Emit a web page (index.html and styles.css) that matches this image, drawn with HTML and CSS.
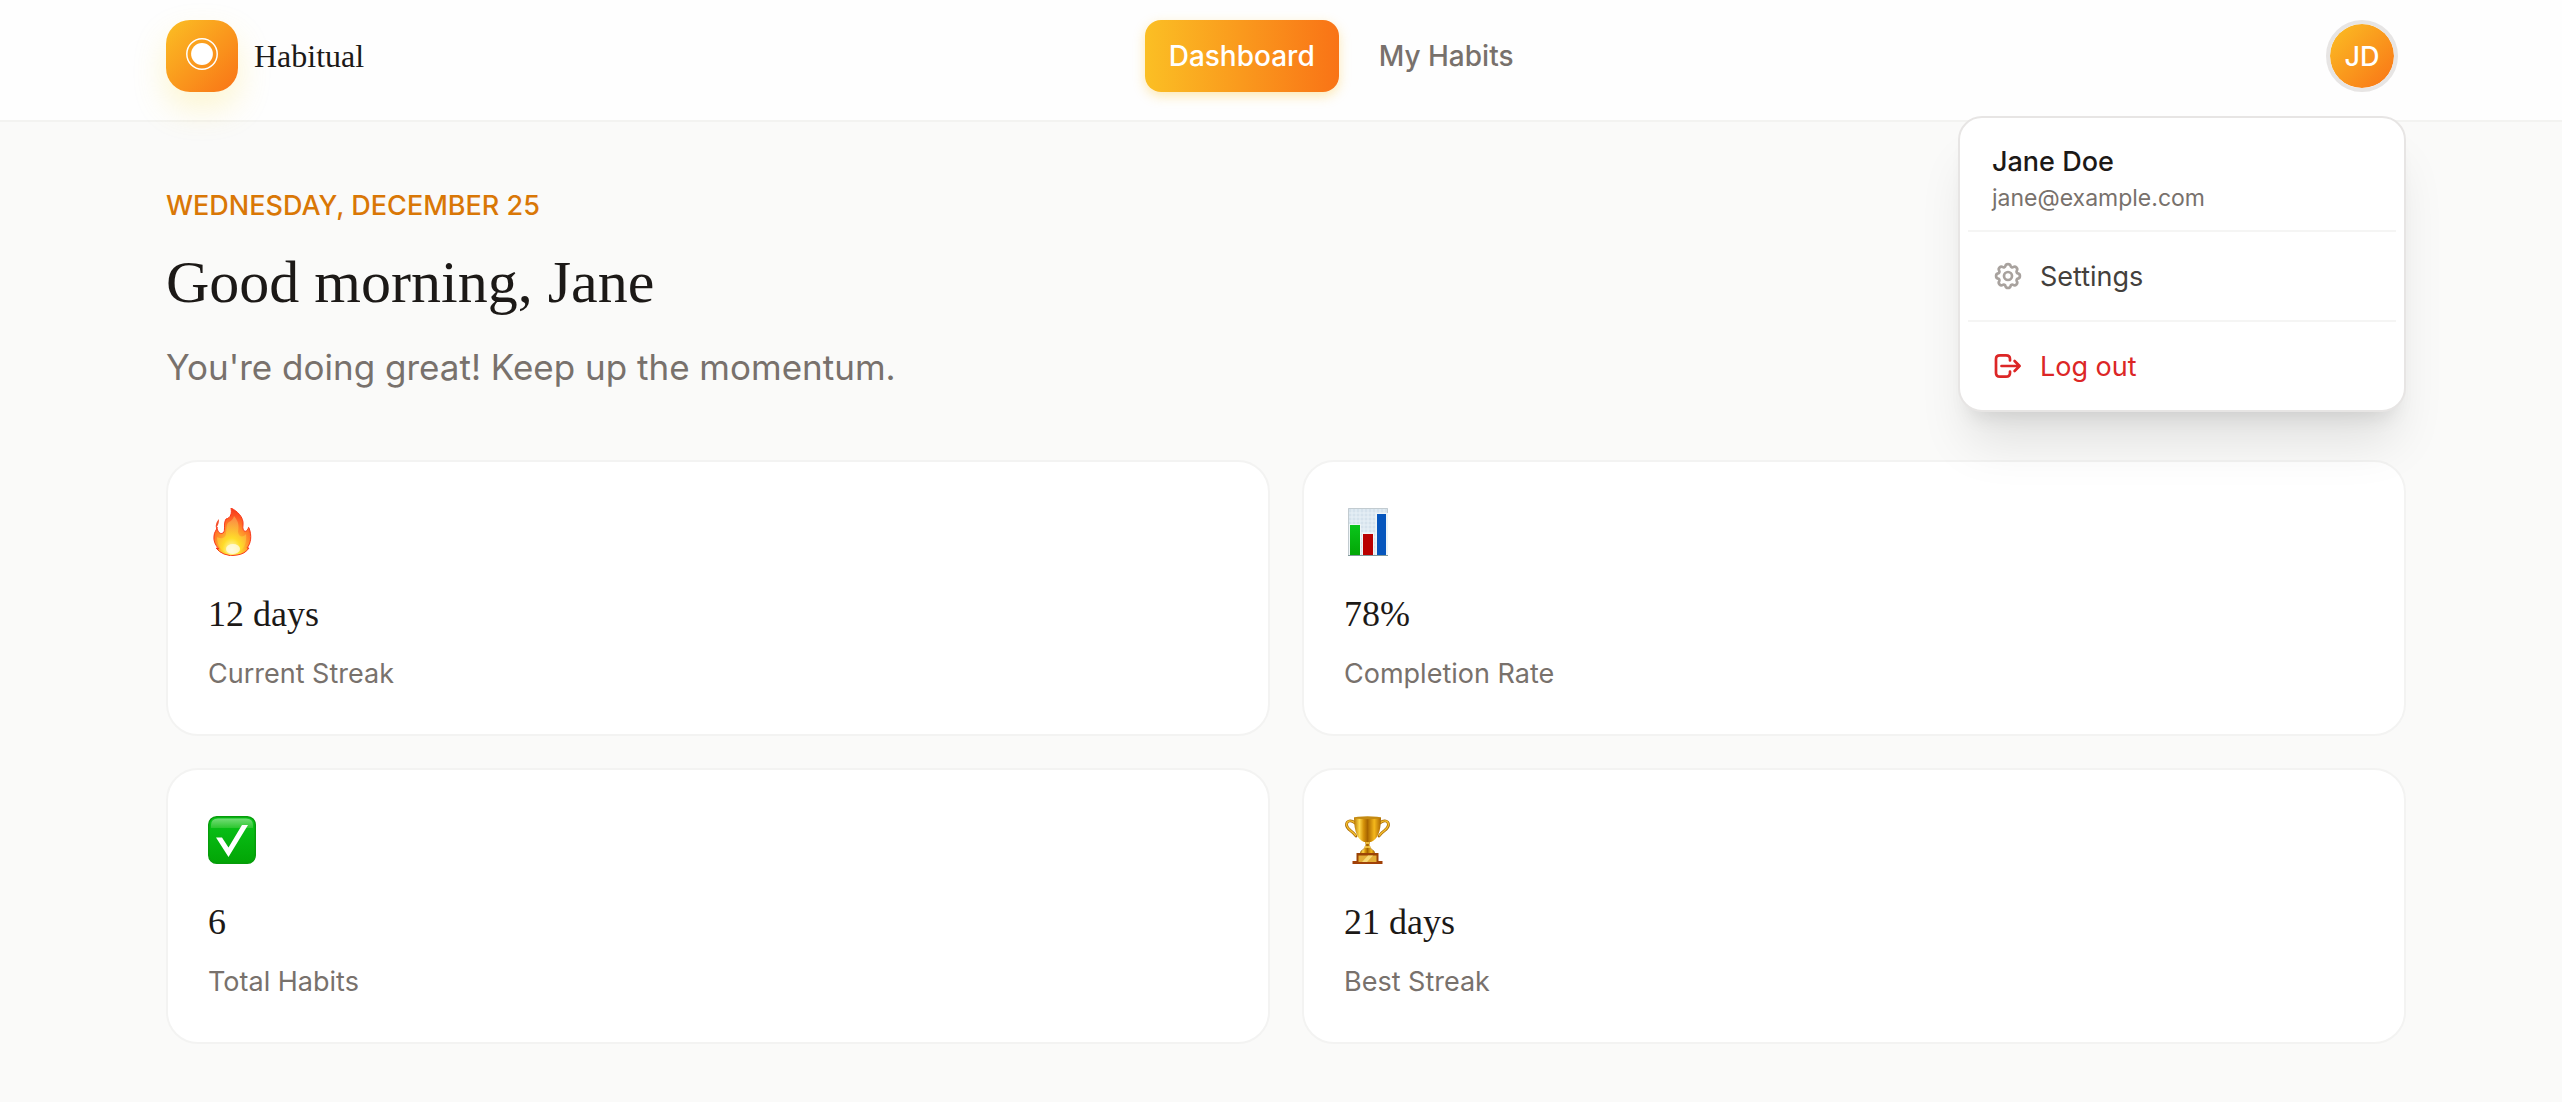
FILE: index.html
```
<!DOCTYPE html>
<html lang="en">
<head>
    <meta charset="UTF-8">
    <meta name="viewport" content="width=device-width, initial-scale=1.0">
    <title>Habitual - Dashboard</title>
    <link rel="stylesheet" href="styles.css">
</head>
<body>
    <header class="header">
        <a class="brand" href="#">
            <span class="brand-mark">
                <svg width="72" height="72" viewBox="0 0 72 72" aria-hidden="true">
                    <circle cx="36" cy="34" r="15.2" fill="none" stroke="#fff" stroke-width="1.5"/>
                    <circle cx="36" cy="34" r="10.9" fill="#fff"/>
                </svg>
            </span>
            <span class="brand-name">Habitual</span>
        </a>

        <nav class="nav">
            <a class="nav-link active" href="#">Dashboard</a>
            <a class="nav-link" href="#">My Habits</a>
        </nav>

        <div class="user">
            <button class="avatar" type="button" aria-haspopup="true" aria-expanded="true">JD</button>

            <div class="menu">
                <div class="menu-user">
                    <div class="menu-name">Jane Doe</div>
                    <div class="menu-email">jane@example.com</div>
                </div>
                <a class="menu-item" href="#">
                    <svg class="menu-icon" viewBox="0 0 32 32" aria-hidden="true">
                        <path d="M13.4 6.1C13.9 3.400 18.1 3.400 18.6 6.1C18.8 7.2 20.2 7.8 21.2 7.2C23.500 5.700 26.300 8.500 24.8 10.8C24.2 11.8 24.8 13.2 25.9 13.4C28.600 13.9 28.600 18.1 25.9 18.6C24.8 18.8 24.2 20.2 24.8 21.2C26.300 23.500 23.500 26.300 21.2 24.8C20.2 24.2 18.8 24.8 18.6 25.9C18.1 28.600 13.9 28.600 13.4 25.9C13.2 24.8 11.8 24.2 10.8 24.8C8.500 26.300 5.700 23.500 7.2 21.2C7.8 20.2 7.2 18.8 6.1 18.6C3.400 18.1 3.400 13.9 6.1 13.4C7.2 13.2 7.8 11.8 7.2 10.8C5.700 8.500 8.500 5.700 10.8 7.2C11.8 7.8 13.2 7.2 13.4 6.1Z"/>
                        <circle cx="16" cy="16" r="4"/>
                    </svg>
                    Settings
                </a>
                <hr class="menu-line">
                <button class="menu-item logout" type="button">
                    <svg class="menu-icon" viewBox="0 0 32 32" aria-hidden="true">
                        <path d="M18 10.5V9Q18 5.300 14 5.300H8Q4 5.300 4 9V23Q4 26.700 8 26.700H14Q18 26.700 18 23V21.5"/>
                        <path d="M9.5 16H27.600M22.600 11L27.600 16L22.600 21"/>
                    </svg>
                    Log out
                </button>
            </div>
        </div>
    </header>

    <main class="main">
        <section class="hero">
            <p class="date">Wednesday, December 25</p>
            <h1 class="greeting">Good morning, Jane</h1>
            <p class="subtitle">You're doing great! Keep up the momentum.</p>
        </section>

        <section class="stats">
            <!-- current streak -->
            <div class="card">
                <svg class="card-icon" viewBox="0 0 48 48" aria-hidden="true">
                    <defs>
                        <radialGradient id="fire" cx=".5" cy=".88" r=".85">
                            <stop offset="0" stop-color="#fff6b0"/>
                            <stop offset=".22" stop-color="#ffe02e"/>
                            <stop offset=".48" stop-color="#ff9d2c"/>
                            <stop offset=".8" stop-color="#ff5a24"/>
                            <stop offset="1" stop-color="#f5391c"/>
                        </radialGradient>
                        <radialGradient id="fireCore" cx=".5" cy=".9" r=".8">
                            <stop offset="0" stop-color="#fffbe0"/>
                            <stop offset=".4" stop-color="#ffdf28"/>
                            <stop offset="1" stop-color="#fa9a48"/>
                        </radialGradient>
                    </defs>
                    <path d="M11 11Q7 15 8 20Q11 17 11 11Z" fill="#f4502c"/>
                    <path d="M23 0C29 3 36 9 35 17C34 22 37 26 40 21C40.500 20 40.300 18.500 41 20C44 28 43 35 39 40L41 40Q37 46 29 47Q23 49 16 46Q11 44 8 40L11 41Q5 35 6 28C6 24 9 22 9 19C9 23 12 27 15 25C18 23 15 16 18 11C23 10 24 5 23 0Z" fill="url(#fire)" stroke="#f9391b" stroke-width="1"/>
                    <path d="M26 8C31 14 31 18 30 24C31 30 36 29 38 26C39 35 36 44 25 46C14 46 9 38 9 29C12 31 18 31 18 25C19 20 18 16 21 14Q25 12 26 8Z" fill="url(#fireCore)" opacity=".85"/>
                    <ellipse cx="25" cy="41" rx="7" ry="5" fill="#fffbe4" opacity=".8"/>
                </svg>
                <div class="card-value">12 days</div>
                <div class="card-label">Current Streak</div>
            </div>

            <!-- completion rate -->
            <div class="card">
                <svg class="card-icon" viewBox="0 0 48 48" aria-hidden="true">
                    <defs>
                        <linearGradient id="green" x2="0" y2="1">
                            <stop offset="0" stop-color="#0ac51b"/>
                            <stop offset="1" stop-color="#02a505"/>
                        </linearGradient>
                    </defs>
                    <rect x="4" width="40" height="48" fill="#d5e2ec"/>
                    <path d="M8 1V48M12 1V48M16 1V48M20 1V48M24 1V48M28 1V48M32 1V48M36 1V48M40 1V48M4 5H44M4 9H44M4 13H44M4 17H44M4 21H44M4 25H44M4 29H44M4 33H44M4 37H44M4 41H44M4 45H44" stroke="#e8f1f7" stroke-width="1"/>
                    <path d="M4.500 48V.5H43.500V48" fill="none" stroke="#c2cbd0"/>
                    <path d="M5 16H17V48H5ZM18 24.500H30V48H18ZM31.500 5H44V48H31.500Z" fill="#eff5f7"/>
                    <rect x="6" y="17" width="10" height="31" fill="url(#green)"/>
                    <rect x="19" y="26" width="10" height="22" fill="#b90000"/>
                    <rect x="33" y="6" width="9" height="42" fill="#0656bd"/>
                    <path d="M4 47.500H44" stroke="#82999c"/>
                </svg>
                <div class="card-value">78%</div>
                <div class="card-label">Completion Rate</div>
            </div>

            <!-- total habits -->
            <div class="card">
                <svg class="card-icon" viewBox="0 0 48 48" aria-hidden="true">
                    <defs>
                        <linearGradient id="shine" x2="0" y2="1">
                            <stop offset="0" stop-color="#8ee28d"/>
                            <stop offset="1" stop-color="#35c936"/>
                        </linearGradient>
                    </defs>
                    <rect x=".7" y=".7" width="46.600" height="46.600" rx="8" fill="url(#green)" stroke="#079c0b" stroke-width="1.400"/>
                    <path d="M3 12V9Q3 2.500 10 2.500H38Q45 2.500 45 9V12Z" fill="url(#shine)" opacity=".8"/>
                    <path d="M8 21.500H14L20.500 31.500L34 9H40L20.500 41Z" fill="#fff"/>
                </svg>
                <div class="card-value">6</div>
                <div class="card-label">Total Habits</div>
            </div>

            <!-- best streak -->
            <div class="card">
                <svg class="card-icon" viewBox="0 0 48 48" aria-hidden="true">
                    <defs>
                        <linearGradient id="gold">
                            <stop offset="0" stop-color="#b67600"/>
                            <stop offset=".2" stop-color="#ffd84a"/>
                            <stop offset=".36" stop-color="#d49108"/>
                            <stop offset=".5" stop-color="#a86500"/>
                            <stop offset=".75" stop-color="#f5b81b"/>
                            <stop offset="1" stop-color="#aa6600"/>
                        </linearGradient>
                    </defs>
                    <path d="M11 7C7 3.500 2.500 4.500 2.500 9C3 14 8 14 12 20M36 7C40 3.500 44.500 4.500 44.500 9C44 14 39 14 35 20" fill="none" stroke="#a76600" stroke-width="2.800" stroke-linecap="round"/>
                    <path d="M11 7C7 3.500 2.500 4.500 2.500 9C3 14 8 14 12 20M36 7C40 3.500 44.500 4.500 44.500 9C44 14 39 14 35 20" fill="none" stroke="#f2bd2e" stroke-width="1.400"/>
                    <path d="M21 24H26L25 29Q26 33 30 35L31 38H16L17 35Q21 33 22 29Z" fill="url(#gold)" stroke="#9b6000" stroke-width=".6"/>
                    <path d="M10 1.500H37Q37 22 27 26H20Q10 22 10 1.500Z" fill="url(#gold)"/>
                    <ellipse cx="23.500" cy="1.700" rx="13.500" ry="1.500" fill="#c48a12"/>
                    <path d="M21.500 27H25.500M20.500 31H26.500" stroke="#ffd650" stroke-width="1.500"/>
                    <path d="M12.500 37H34.500V45H12.500Z" fill="#9b4305"/>
                    <path d="M8.500 45H38.500V48H8.500Z" fill="#a14108"/>
                    <path d="M14.500 39.500H32.500V46H14.500Z" fill="#e3ae37"/>
                    <path d="M18 46L24 39.500H29L23 46Z" fill="#f7d875"/>
                </svg>
                <div class="card-value">21 days</div>
                <div class="card-label">Best Streak</div>
            </div>
        </section>
    </main>
</body>
</html>
```
FILE: styles.css
```
:root {
    --page-bg: #fafaf9;
    --text-dark: #1c1917;
    --text-muted: #78716c;
    --border: #e7e5e4;
    --border-light: #f3f3f2;
    --amber: #fbbf24;
    --orange: #f97316;
}

* {
    box-sizing: border-box;
}

body {
    font-family: Inter, 'Liberation Sans', sans-serif;
    font-size: 28px;
    background: var(--page-bg);
    color: var(--text-dark);
    margin: 0;
    min-height: 100vh;
}

a {
    color: inherit;
    text-decoration: none;
}

p,
h1 {
    margin: 0;
}

/* header */
.header {
    display: flex;
    justify-content: space-between;
    align-items: center;
    padding: 20px 156px 28px 166px;
    background: #fefefe;
    border-bottom: 2px solid #f3f3f1;
}

.brand {
    display: flex;
    align-items: center;
    gap: 16px;
}

.brand-mark {
    display: flex;
    border-radius: 24px;
    background: linear-gradient(135deg, var(--amber), var(--orange));
    box-shadow: 0 16px 32px rgba(253, 224, 71, 0.25);
}

.brand-name {
    font-family: 'Liberation Serif', serif;
    font-size: 32px;
}

.nav {
    display: flex;
    gap: 16px;
}

.nav-link {
    padding: 0 24px;
    border-radius: 16px;
    font-size: 28px;
    font-weight: 500;
    line-height: 72px;
    color: var(--text-muted);
}

.nav-link.active {
    color: #fff;
    background: linear-gradient(90deg, var(--amber), var(--orange));
    box-shadow: 0 4px 12px rgba(251, 191, 36, 0.35);
}

.user {
    position: relative;
    padding: 0 8px;
}

.avatar {
    display: block;
    width: 72px;
    height: 72px;
    padding: 0;
    border: 4px solid var(--border);
    border-radius: 50%;
    background: linear-gradient(135deg, var(--amber), var(--orange)) padding-box;
    color: #fff;
    font-family: inherit;
    font-size: 27px;
    font-weight: 500;
    cursor: pointer;
}

/* dropdown */
.menu {
    position: absolute;
    top: calc(100% + 24px);
    right: 0;
    z-index: 10;
    width: 448px;
    padding: 8px;
    border: 2px solid var(--border);
    border-radius: 24px;
    background: #fff;
    box-shadow: 0 40px 50px -10px rgba(0, 0, 0, 0.1), 0 16px 20px -12px rgba(0, 0, 0, 0.1);
}

.menu-user {
    padding: 16px 24px;
    border-bottom: 2px solid #f5f5f4;
}

.menu-name {
    font-size: 27px;
    font-weight: 500;
    line-height: 40px;
}

.menu-email {
    font-size: 23px;
    line-height: 32px;
    color: var(--text-muted);
}

.menu-item {
    display: flex;
    align-items: center;
    gap: 16px;
    width: 100%;
    height: 72px;
    margin: 8px 0;
    padding: 0 24px;
    border: none;
    background: none;
    color: #44403c;
    font-family: inherit;
    font-size: 27px;
    cursor: pointer;
}

.menu-item.logout {
    margin-bottom: 0;
    color: #dc2626;
}

.menu-icon {
    width: 32px;
    height: 32px;
    fill: none;
    stroke: #a8a29e;
    stroke-width: 2.7;
    stroke-linecap: round;
    stroke-linejoin: round;
}

.logout .menu-icon {
    stroke: #dc2626;
}

.menu-line {
    height: 2px;
    margin: 0;
    border: none;
    background: #f5f5f4;
}

/* content */
.main {
    padding: 64px 156px 56px 166px;
}

.hero {
    margin-bottom: 66px;
}

.date {
    font-size: 27px;
    font-weight: 500;
    line-height: 40px;
    text-transform: uppercase;
    color: #d97706;
}

.greeting {
    margin: 14px 0 16px;
    font-family: 'Liberation Serif', serif;
    font-size: 60px;
    font-weight: 400;
    line-height: 84px;
}

.subtitle {
    font-size: 35px;
    line-height: 54px;
    color: var(--text-muted);
}

.stats {
    display: grid;
    grid-template-columns: 1fr 1fr;
    gap: 32px;
}

.card {
    padding: 40px;
    border: 2px solid var(--border-light);
    border-radius: 32px;
    background: #fff;
}

.card-icon {
    display: block;
    width: 48px;
    height: 48px;
    margin: 6px 0 22px;
}

.card-value {
    margin-bottom: 4px;
    font-family: 'Liberation Serif', serif;
    font-size: 36px;
    line-height: 72px;
}

.card-label {
    font-size: 27px;
    line-height: 40px;
    color: var(--text-muted);
}
```
